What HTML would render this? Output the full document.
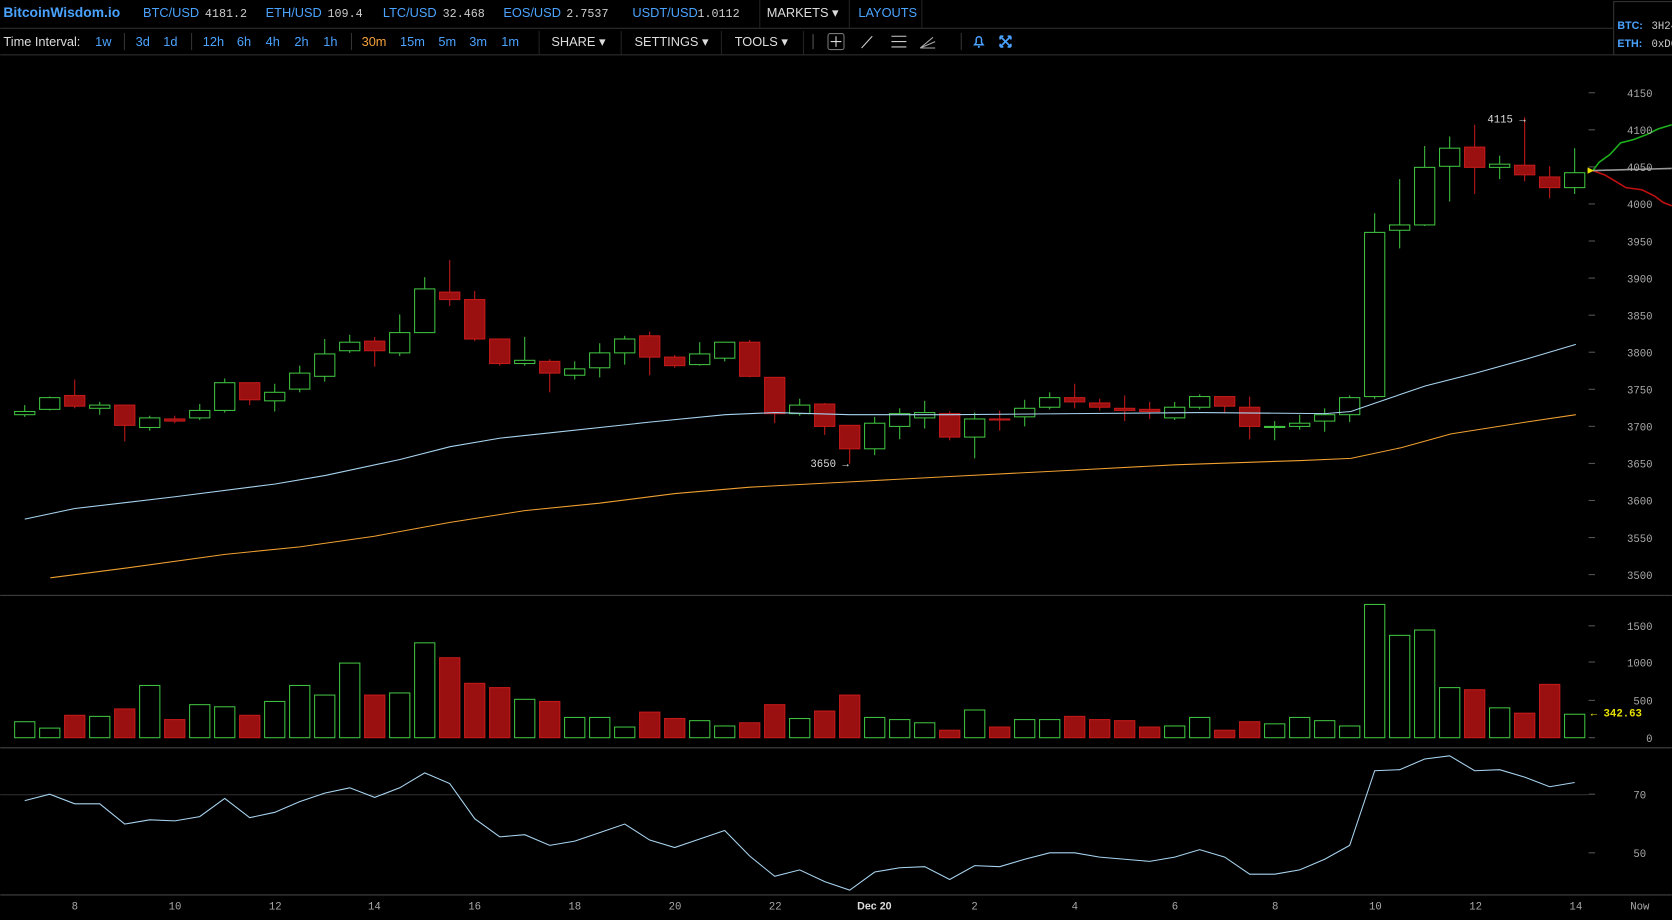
<!DOCTYPE html>
<html><head><meta charset="utf-8"><style>
html,body{margin:0;padding:0;background:#000;overflow:hidden}
svg{display:block}
text{font-family:"Liberation Sans",sans-serif}
.m{font-family:"Liberation Mono",monospace}
</style></head><body>
<svg id="s" width="1672" height="920" viewBox="0 0 1568 863" xmlns="http://www.w3.org/2000/svg">
<rect width="1568" height="863" fill="#000"/>
<line x1="0" y1="26.5" x2="1513" y2="26.5" stroke="#333"/>
<line x1="0" y1="51.5" x2="1568" y2="51.5" stroke="#333"/>
<g font-size="12">
<text x="3" y="16" fill="#4aa3ff" font-weight="bold" font-size="13">BitcoinWisdom.io</text>
<text x="134" y="16" fill="#4aa3ff">BTC/USD</text><text x="192" y="16" fill="#ccc" class="m" font-size="11">4181.2</text>
<text x="249" y="16" fill="#4aa3ff">ETH/USD</text><text x="307" y="16" fill="#ccc" class="m" font-size="11">109.4</text>
<text x="359" y="16" fill="#4aa3ff">LTC/USD</text><text x="415" y="16" fill="#ccc" class="m" font-size="11">32.468</text>
<text x="472" y="16" fill="#4aa3ff">EOS/USD</text><text x="531" y="16" fill="#ccc" class="m" font-size="11">2.7537</text>
<text x="593" y="16" fill="#4aa3ff">USDT/USD</text><text x="654" y="16" fill="#ccc" class="m" font-size="11">1.0112</text>
<line x1="712.5" y1="0" x2="712.5" y2="26" stroke="#222"/><line x1="796.5" y1="0" x2="796.5" y2="26" stroke="#222"/>
<text x="719" y="16" fill="#ddd">MARKETS ▾</text>
<text x="805" y="16" fill="#4aa3ff">LAYOUTS</text>
<line x1="864.5" y1="0" x2="864.5" y2="26" stroke="#222"/>
<text x="3" y="43" fill="#ddd">Time Interval:</text>
<text x="89" y="43" fill="#4aa3ff">1w</text>
<line x1="116.5" y1="31" x2="116.5" y2="47" stroke="#333"/>
<text x="127" y="43" fill="#4aa3ff">3d</text><text x="153" y="43" fill="#4aa3ff">1d</text>
<line x1="179.5" y1="31" x2="179.5" y2="47" stroke="#333"/>
<text x="190" y="43" fill="#4aa3ff">12h</text><text x="222" y="43" fill="#4aa3ff">6h</text><text x="249" y="43" fill="#4aa3ff">4h</text><text x="276" y="43" fill="#4aa3ff">2h</text><text x="303" y="43" fill="#4aa3ff">1h</text>
<line x1="329.5" y1="31" x2="329.5" y2="47" stroke="#333"/>
<text x="339" y="43" fill="#f7a33b">30m</text><text x="375" y="43" fill="#4aa3ff">15m</text><text x="411" y="43" fill="#4aa3ff">5m</text><text x="440" y="43" fill="#4aa3ff">3m</text><text x="470" y="43" fill="#4aa3ff">1m</text>
<line x1="505.5" y1="29" x2="505.5" y2="51" stroke="#222"/>
<text x="517" y="43" fill="#ddd">SHARE ▾</text>
<line x1="582.5" y1="29" x2="582.5" y2="51" stroke="#222"/>
<text x="595" y="43" fill="#ddd">SETTINGS ▾</text>
<line x1="676.5" y1="29" x2="676.5" y2="51" stroke="#222"/>
<text x="689" y="43" fill="#ddd">TOOLS ▾</text>
<line x1="753.5" y1="29" x2="753.5" y2="51" stroke="#222"/>
<line x1="762.5" y1="32" x2="762.5" y2="46" stroke="#555"/>
</g>
<rect x="776.5" y="31.5" width="15" height="15" fill="none" stroke="#777" rx="2"/>
<path d="M784 34v10M779 39h10" stroke="#ddd"/>
<path d="M808 45l10-11" stroke="#ccc"/>
<path d="M836 34h14M836 39h14M836 44h14" stroke="#ccc"/>
<path d="M863 45l14-6M863 45l12-10M863 45l14 0" stroke="#aaa"/>
<line x1="901.5" y1="31" x2="901.5" y2="47" stroke="#333"/>
<path d="M914 42h8l-1.5-2v-3a2.5 2.5 0 0 0-5 0v3z" fill="none" stroke="#4aa3ff" stroke-width="1.4"/><circle cx="918" cy="44" r="1" fill="#4aa3ff"/>
<path d="M938 34l10 10M948 34l-10 10M938 34h3M938 34v3M948 34h-3M948 34v3M938 44h3M938 44v-3M948 44h-3M948 44v-3" stroke="#4aa3ff" stroke-width="1.6"/>
<rect x="1513.5" y="1.5" width="60" height="50" fill="#000" stroke="#333"/>
<text x="1517" y="27" fill="#4aa3ff" font-size="10" font-weight="bold">BTC:</text><text x="1549" y="27" fill="#ccc" font-size="10" class="m">3H24</text>
<text x="1517" y="44" fill="#4aa3ff" font-size="10" font-weight="bold">ETH:</text><text x="1549" y="44" fill="#ccc" font-size="10" class="m">0xD0</text>
<line x1="0" y1="558.5" x2="1568" y2="558.5" stroke="#444"/>
<line x1="0" y1="701.5" x2="1568" y2="701.5" stroke="#444"/>
<line x1="0" y1="745.5" x2="1490" y2="745.5" stroke="#333"/>
<line x1="0" y1="839.5" x2="1568" y2="839.5" stroke="#444"/>
<g id="g"></g>
</svg>
<script>
var g=document.getElementById('g'),h='';
var C=[[386,389,380,391,1],[373,384,372,385,1],[371,381,356,383,0],[380,383,377,389,1],[380,399,380,414,0],[392,401,390,404,1],[393,395,390,397,0],[385,392,379,394,1],[359,385,355,387,1],[359,375,359,380,0],[368,376,360,386,1],[350,365,343,368,1],[332,353,318,358,1],[321,329,314,331,1],[320,329,316,344,0],[312,331,295,334,1],[271,312,260,312,1],[274,281,244,287,0],[281,318,273,320,0],[318,341,318,343,0],[338,341,316,343,1],[339,350,337,368,0],[346,352,339,356,1],[331,345,322,354,1],[318,331,315,342,1],[315,335,311,352,0],[335,343,333,345,0],[332,342,321,343,1],[321,336,321,339,1],[321,353,319,354,0],[354,388,354,397,0],[380,388,374,390,1],[379,400,378,408,0],[399,421,399,435,0],[397,421,391,427,1],[388,400,383,412,1],[387,392,376,402,1],[388,410,386,413,0],[393,410,387,430,1],[393,394,385,404,0],[383,391,375,400,1],[373,382,368,384,1],[373,377,360,383,0],[378,382,374,385,0],[383,385,371,395,0],[384,386,377,393,0],[382,392,377,394,1],[372,382,370,384,1],[372,381,372,387,0],[382,400,372,412,0],[400,401,395,413,1],[397,400,389,403,1],[389,395,383,405,1],[373,389,371,396,1],[218,372,200,374,1],[211,216,168,233,1],[157,211,137,212,1],[139,156,128,189,1],[138,157,117,182,0],[154,157,146,168,1],[155,164,110,170,0],[166,176,156,186,0],[162,176,139,182,1]];
var V=[677,683,671,672,665,643,675,661,663,671,658,643,652,622,652,650,603,617,641,645,656,658,673,673,682,668,674,676,681,678,661,674,667,652,673,675,678,685,666,682,675,675,672,675,676,682,681,673,685,677,679,673,676,681,567,596,591,645,647,664,669,642,670];
var R=[751,745,754,754,773,769,770,766,749,767,762,752,744,739,748,739,725,735,768,785,783,793,789,781,773,788,795,787,779,803,822,816,827,835,818,814,813,825,812,813,806,800,800,804,806,808,804,797,804,820,820,816,806,793,723,722,712,709,723,722,729,738,734];
function X(i){return 23+23.45*i}
var rs='';
for(var i=0;i<63;i++){var c=C[i],x=X(i),col=c[4]?'#3fbf3f':'#c21a1a',fill=c[4]?'#000':'#9a1010';
h+='<line x1="'+x+'" y1="'+c[2]+'" x2="'+x+'" y2="'+c[3]+'" stroke="'+col+'"/>';
h+='<rect x="'+(x-9.5)+'" y="'+c[0]+'" width="19" height="'+Math.max(c[1]-c[0],1)+'" fill="'+fill+'" stroke="'+col+'"/>';
var vc=C[i][4];
h+='<rect x="'+(x-9.5)+'" y="'+V[i]+'" width="19" height="'+(692-V[i])+'" fill="'+(vc?'#000':'#9a1010')+'" stroke="'+(vc?'#3fbf3f':'#c21a1a')+'"/>';
rs+=(i?'L':'M')+x+' '+R[i];}
h+='<path d="'+rs+'" fill="none" stroke="#a8d4f0"/>';
h+='<path d="M23 487L70 477L164 466L258 454L305 446L375 431L422 419L469 411L516 406L609 396L680 389L727 387L797 389L891 389L1008 388L1126 387L1243 388L1267 386L1290 378L1337 362L1384 350L1431 337L1478 323" fill="none" stroke="#a8d4f0"/>';
h+='<path d="M47 542L117 533L211 520L281 513L351 503L422 490L492 479L562 472L633 463L703 457L797 452L891 447L1008 441L1102 436L1220 432L1267 430L1314 420L1361 407L1431 396L1478 389" fill="none" stroke="#f0a030"/>';
h+='<path d="M1494 160L1500 152L1510 145L1520 134L1532 131L1545 126L1555 121L1568 117" fill="none" stroke="#1cb01c" stroke-width="1.5"/>';
h+='<path d="M1494 160L1505 164L1515 170L1525 176L1540 178L1552 184L1560 190L1568 193" fill="none" stroke="#c01010" stroke-width="1.5"/>';
h+='<path d="M1494 160L1568 158" stroke="#999" stroke-width="1.5"/>';
h+='<path d="M1489 157l6 3l-6 3z" fill="#e8e000"/>';
h+='<text x="1395" y="115" fill="#ddd" font-size="10" class="m">4115 →</text>';
h+='<text x="760" y="438" fill="#ddd" font-size="10" class="m">3650 →</text>';
var P=[4150,4100,4050,4000,3950,3900,3850,3800,3750,3700,3650,3600,3550,3500];
for(var j=0;j<P.length;j++){var y=87+(4150-P[j])*0.6954;h+='<line x1="1490" y1="'+y+'" x2="1496" y2="'+y+'" stroke="#555"/><text x="1550" y="'+(y+4)+'" fill="#aaa" font-size="10" text-anchor="end" class="m">'+P[j]+'</text>';}
var VL=[[1500,587],[1000,621],[500,657],[0,692]];
VL.forEach(function(v){h+='<line x1="1490" y1="'+v[1]+'" x2="1496" y2="'+v[1]+'" stroke="#555"/><text x="1550" y="'+(v[1]+4)+'" fill="#aaa" font-size="10" text-anchor="end" class="m">'+v[0]+'</text>';});
h+='<text x="1492" y="672" fill="#e8e000" font-size="10" class="m" font-weight="bold">← 342.63</text>';
[[70,745],[50,800]].forEach(function(v){h+='<line x1="1490" y1="'+v[1]+'" x2="1496" y2="'+v[1]+'" stroke="#555"/><text x="1544" y="'+(v[1]+4)+'" fill="#aaa" font-size="10" text-anchor="end" class="m">'+v[0]+'</text>';});
var XL=[['8',70],['10',164],['12',258],['14',351],['16',445],['18',539],['20',633],['22',727],['Dec 20',820],['2',914],['4',1008],['6',1102],['8',1196],['10',1290],['12',1384],['14',1478],['Now',1538]];
XL.forEach(function(v){h+='<text x="'+v[1]+'" y="853" fill="'+(v[0]=='Dec 20'?'#ddd':'#aaa')+'" font-size="10" text-anchor="middle" '+(v[0]=='Dec 20'?'font-weight="bold"':'class="m"')+'>'+v[0]+'</text>';});
g.innerHTML=h;
</script>
</body></html>
